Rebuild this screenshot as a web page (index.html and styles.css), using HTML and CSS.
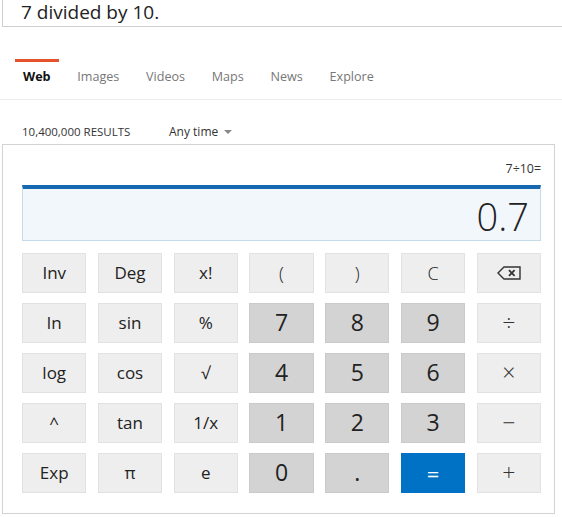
FILE: index.html
```html
<!DOCTYPE html>
<html>
<head>
<meta charset="utf-8">
<link rel="stylesheet" href="styles.css">
</head>
<body>
<div class="searchbox">7 divided by 10.</div>
<nav class="tabs">
  <a class="tab active">Web</a>
  <a class="tab">Images</a>
  <a class="tab">Videos</a>
  <a class="tab">Maps</a>
  <a class="tab">News</a>
  <a class="tab">Explore</a>
</nav>
<div class="results">
  <span class="count">10,400,000 RESULTS</span>
  <span class="time">Any time <span class="caret"></span></span>
</div>
<div class="card">
  <div class="expr">7÷10=</div>
  <div class="display">0.7</div>
  <div class="keys">
    <button class="key">Inv</button>
    <button class="key">Deg</button>
    <button class="key">x!</button>
    <button class="key thin">(</button>
    <button class="key thin">)</button>
    <button class="key thin">C</button>
    <button class="key"><svg class="bksp" width="24" height="14" viewBox="0 0 24 14"><path d="M7 1H23V13H7L1 7Z" fill="none" stroke="#333" stroke-width="1.4" stroke-linejoin="miter"/><path d="M12 4.2L17.6 9.8M17.6 4.2L12 9.8" stroke="#333" stroke-width="1.8"/></svg></button>

    <button class="key">ln</button>
    <button class="key">sin</button>
    <button class="key">%</button>
    <button class="key num">7</button>
    <button class="key num">8</button>
    <button class="key num">9</button>
    <button class="key op">÷</button>

    <button class="key">log</button>
    <button class="key">cos</button>
    <button class="key">√</button>
    <button class="key num">4</button>
    <button class="key num">5</button>
    <button class="key num">6</button>
    <button class="key op">×</button>

    <button class="key">^</button>
    <button class="key">tan</button>
    <button class="key">1/x</button>
    <button class="key num">1</button>
    <button class="key num">2</button>
    <button class="key num">3</button>
    <button class="key op">−</button>

    <button class="key">Exp</button>
    <button class="key">π</button>
    <button class="key">e</button>
    <button class="key num">0</button>
    <button class="key num">.</button>
    <button class="key eq">=</button>
    <button class="key op">+</button>
  </div>
</div>
</body>
</html>
```
FILE: styles.css
```css
html, body {
  margin: 0;
  padding: 0;
  background: #fff;
}
body {
  font-family: "Open Sans", "Noto Sans", "Liberation Sans", sans-serif;
  color: #222;
  overflow: hidden;
}
.searchbox {
  margin-left: 2px;
  height: 27px;
  border-left: 1px solid #cfcfcf;
  border-bottom: 1px solid #cfcfcf;
  padding-left: 18px;
  font-size: 19px;
  line-height: 24px;
  color: #222;
  box-sizing: border-box;
}
.tabs {
  display: flex;
  margin-top: 32px;
  padding-left: 15px;
  height: 40px;
  border-bottom: 1px solid #ececec;
  gap: 10.7px;
}
.tab {
  display: block;
  padding: 4px 8px 0 8px;
  border-top: 3px solid transparent;
  font-size: 12.6px;
  line-height: 22px;
  color: #777;
}
.tab.active {
  border-top-color: #e5532d;
  color: #111;
  font-weight: 700;
}
.results {
  display: flex;
  align-items: center;
  height: 44px;
  box-sizing: border-box;
  padding: 18px 0 0 22px;
  font-size: 11.5px;
  color: #333;
}
.count {
  width: 147px;
}
.time {
  display: flex;
  align-items: center;
  gap: 6px;
  font-size: 12px;
}
.caret {
  width: 0;
  height: 0;
  border-left: 4px solid transparent;
  border-right: 4px solid transparent;
  border-top: 4px solid #888;
  margin-top: 1px;
}
.card {
  margin-left: 2px;
  width: 553px;
  box-sizing: border-box;
  border: 1px solid #d3d3d3;
  padding: 15px 13px 20px 19px;
}
.expr {
  text-align: right;
  font-size: 12.4px;
  line-height: 18px;
  color: #333;
  margin-bottom: 7px;
}
.display {
  height: 56px;
  box-sizing: border-box;
  border: 1px solid #c6dbea;
  border-top: 4px solid #1668b0;
  background: #f2f7fc;
  text-align: right;
  padding-right: 11px;
  font-size: 38px;
  font-weight: 300;
  line-height: 54px;
  color: #222;
}
.keys {
  margin-top: 12px;
  display: grid;
  grid-template-columns: repeat(7, 1fr);
  grid-auto-rows: 39.5px;
  column-gap: 11.3px;
  row-gap: 10.5px;
}
.key {
  font-family: inherit;
  margin: 0;
  padding: 0;
  border: 1px solid #e2e2e2;
  background: #eeeeee;
  color: #222;
  font-size: 17px;
  display: flex;
  align-items: center;
  justify-content: center;
  line-height: 1;
}
.key.thin {
  font-weight: 300;
  font-size: 18px;
}
.key.num {
  background: #d3d3d3;
  border-color: #cacaca;
  font-size: 23px;
  color: #222;
}
.key.op {
  font-size: 23px;
  font-weight: 300;
  color: #333;
}
.key.eq {
  background: #0072c6;
  border-color: #0072c6;
  color: #fff;
  font-size: 22px;
}
.bksp {
  display: block;
}
```
